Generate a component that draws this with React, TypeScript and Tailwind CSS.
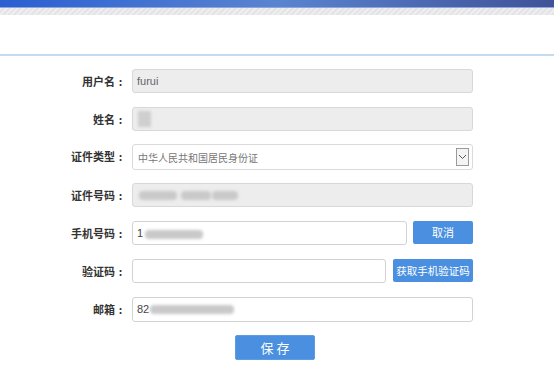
import React from 'react';

const cjk = { fontFamily: '"Noto Sans CJK SC", "Noto Sans", sans-serif' };

interface FieldRowProps {
  label: string;
  className?: string;
  children: React.ReactNode;
}

const FieldRow: React.FC<FieldRowProps> = ({ label, className = '', children }) => (
  <div className={`flex items-start ${className}`}>
    <div className="w-[126px] shrink-0 h-[24px] flex items-center justify-end text-[11px] font-bold text-[#333]">
      <span>{label}</span>
      <span className="w-[11px] text-center">:</span>
    </div>
    <div className="ml-[6px] flex items-start">{children}</div>
  </div>
);

// Smudged-out personal data
const Blur: React.FC<{ w: number; className?: string }> = ({ w, className = '' }) => (
  <span
    className={`inline-block h-[9px] bg-[#c9c9c9] blur-[1.5px] rounded-sm ${className}`}
    style={{ width: w }}
  />
);

const ReadOnlyBox: React.FC<{ children?: React.ReactNode }> = ({ children }) => (
  <div className="w-[341px] h-[24px] bg-[#ededed] border border-[#d8d8d8] rounded-[3px] flex items-center pl-[4px] text-[11px] text-[#666]">
    {children}
  </div>
);

export default function App() {
  return (
    <div className="w-[554px] h-[389px] bg-white overflow-hidden" style={cjk}>
      {/* top banner */}
      <div className="h-[8px] bg-gradient-to-r from-[#2a5ed2] via-[#5a84d0] to-[#3f5298] border-b border-[#8fa6d8]" />
      <div className="h-[7px] bg-[repeating-linear-gradient(135deg,#eeeef0_0px,#eeeef0_2px,#e4e4e7_2px,#e4e4e7_4px)]" />
      <div className="h-[39px]" />
      <div className="h-[2px] bg-[#c4dbef]" />

      <div className="pt-[13px] flex flex-col">
        <FieldRow label="用户名">
          <ReadOnlyBox>
            <span style={{ fontFamily: '"Liberation Sans", sans-serif' }}>furui</span>
          </ReadOnlyBox>
        </FieldRow>

        <FieldRow label="姓名" className="mt-[14px]">
          <ReadOnlyBox>
            <span className="inline-block w-[13px] h-[16px] bg-[#cfcfcf] blur-[1.5px] ml-[1px]" />
          </ReadOnlyBox>
        </FieldRow>

        <FieldRow label="证件类型" className="mt-[13px]">
          <div className="w-[341px] h-[26px] bg-white border border-[#dadada] rounded-[3px] flex items-center justify-between pl-[5px] pr-[3px] text-[10px] text-[#777]">
            <span>中华人民共和国居民身份证</span>
            <span className="w-[13px] h-[18px] border border-[#9a9a9a] bg-[#f4f4f4] flex items-center justify-center">
              <svg width="9" height="6" viewBox="0 0 9 6">
                <path d="M1 1 L4.5 4.5 L8 1" fill="none" stroke="#555" strokeWidth="1" />
              </svg>
            </span>
          </div>
        </FieldRow>

        <FieldRow label="证件号码" className="mt-[13px]">
          <ReadOnlyBox>
            <Blur w={38} className="ml-[2px]" />
            <Blur w={30} className="ml-[4px]" />
            <Blur w={26} className="ml-[1px]" />
          </ReadOnlyBox>
        </FieldRow>

        <FieldRow label="手机号码" className="mt-[14px]">
          <div className="w-[275px] h-[24px] bg-white border border-[#d2d2d2] rounded-[3px] flex items-center pl-[4px] text-[11px] text-[#444]" style={{ fontFamily: '"Liberation Sans", sans-serif' }}>
            <span>1</span>
            <Blur w={58} className="ml-[2px] mt-[3px]" />
          </div>
          <button className="ml-[6px] w-[60px] h-[23px] bg-[#4a8fe0] rounded-[2px] text-white text-[11px]">
            取消
          </button>
        </FieldRow>

        <FieldRow label="验证码" className="mt-[14px]">
          <div className="w-[254px] h-[24px] bg-white border border-[#d2d2d2] rounded-[3px]" />
          <button className="ml-[7px] w-[80px] h-[23px] bg-[#4a8fe0] rounded-[2px] text-white text-[10.5px] whitespace-nowrap">
            获取手机验证码
          </button>
        </FieldRow>

        <FieldRow label="邮箱" className="mt-[14px]">
          <div className="w-[341px] h-[25px] bg-white border border-[#d2d2d2] rounded-[3px] flex items-center pl-[4px] text-[11px] text-[#444]" style={{ fontFamily: '"Liberation Sans", sans-serif' }}>
            <span>82</span>
            <Blur w={84} className="ml-[1px]" />
          </div>
        </FieldRow>

        <div className="mt-[13px] flex justify-center pr-[4px]">
          <button className="w-[80px] h-[25px] bg-[#4a8fe0] border border-[#5d9be3] rounded-[2px] text-white text-[13px]">
            保 存
          </button>
        </div>
      </div>
    </div>
  );
}
